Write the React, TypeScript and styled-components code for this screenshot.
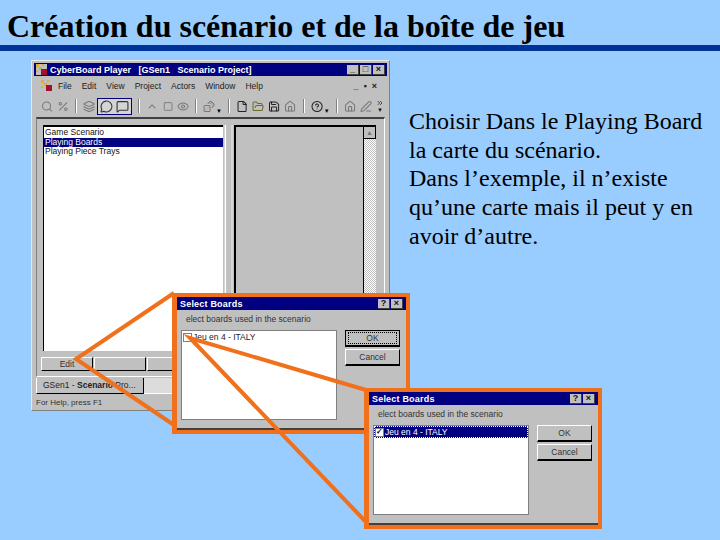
import React from 'react';
import styled, { createGlobalStyle } from 'styled-components';
import {
  Search, Percent, Layers, MessageCircle, MessageSquare, ChevronUp, Square, Eye, Dices,
  File, FolderOpen, Save, Home, HelpCircle, PenLine, ChevronsRight,
} from 'lucide-react';

const GlobalStyle = createGlobalStyle`
  html, body {
    margin: 0;
    padding: 0;
    background: #99ccff;
  }
  * { box-sizing: border-box; }
`;

const Slide = styled.div`
  position: relative;
  width: 720px;
  height: 540px;
  overflow: hidden;
  background: #99ccff;
  font-family: "Liberation Serif", serif;
  color: #000;
`;

const Title = styled.h1`
  margin: 0;
  height: 45px;
  padding: 8px 0 0 7px;
  font-size: 32px;
  line-height: 36px;
  font-weight: bold;
  white-space: nowrap;
`;

const Rule = styled.div`
  height: 6px;
  background: #003399;
`;

const Content = styled.div`
  display: flex;
  align-items: flex-start;
  padding: 9px 0 0 31px;
`;

const Note = styled.p`
  margin: 47px 0 0 19px;
  width: 305px;
  font-size: 24px;
  line-height: 28.7px;
`;

const AppWindow = styled.div`
  display: flex;
  flex-direction: column;
  width: 359px;
  height: 351px;
  flex: none;
  padding: 2px 2px 3px;
  background: #c0c0c0;
  border-top: 1px solid #e8e8e8;
  border-left: 1px solid #e8e8e8;
  border-right: 1px solid #808080;
  border-bottom: 1px solid #808080;
  font-family: "Liberation Sans", sans-serif;
`;

const TitleBar = styled.div`
  display: flex;
  align-items: center;
  height: 13px;
  flex: none;
  padding: 0 2px;
  background: #000080;
  color: #fff;
  font-size: 9px;
  font-weight: bold;
  white-space: nowrap;
`;

const TitleText = styled.span`
  flex: 1;
  margin-left: 3px;
`;

const CaptionButton = styled.span`
  display: flex;
  align-items: center;
  justify-content: center;
  width: 12px;
  height: 10px;
  margin-left: 1px;
  background: #c0c0c0;
  color: #111;
  font-size: 9px;
  line-height: 10px;
  font-weight: bold;
  border-right: 1px solid #404040;
  border-bottom: 1px solid #404040;
`;

const MenuBar = styled.div`
  display: flex;
  align-items: center;
  height: 19px;
  flex: none;
  padding: 0 5px 0 7px;
  font-size: 8.5px;
  color: #222;
`;

const MenuLead = styled.span`
  display: flex;
  margin-right: 6px;
`;

const MenuItem = styled.span`
  margin-right: 10px;
`;

const MenuTail = styled.span`
  margin-left: auto;
  font-size: 9px;
  font-weight: bold;
  letter-spacing: 5px;
`;

const ToolBar = styled.div`
  display: flex;
  align-items: center;
  gap: 4px;
  height: 22px;
  flex: none;
  padding: 0 3px 0 7px;
  color: #777;
`;

const ToolSep = styled.span`
  width: 2px;
  height: 14px;
  margin: 0 2px;
  border-left: 1px solid #808080;
  border-right: 1px solid #fff;
`;

const ToolGroup = styled.span`
  display: flex;
  align-items: center;
  gap: 3px;
  height: 17px;
  padding: 0 2px;
  margin-left: -2px;
  color: #333;
  border: 1px solid #000080;
  background: #d4d4d4;
`;

const DropMark = styled.span`
  align-self: flex-end;
  margin: 0 0 3px -3px;
  font-size: 6px;
  line-height: 6px;
  color: #000;
`;

const ToolTail = styled.span`
  display: flex;
  flex-direction: column;
  align-items: center;
  margin-left: auto;
  color: #111;
  font-size: 6px;
  line-height: 7px;
`;

const Client = styled.div`
  display: flex;
  flex: none;
  height: 260px;
  margin: 0 2px;
  padding: 6px;
  border: 1px solid #808080;
  border-top: 2px solid #404040;
  border-right-color: #fff;
  border-bottom-color: #fff;
`;

const LeftPane = styled.div`
  display: flex;
  flex-direction: column;
  width: 180px;
  flex: none;
`;

const TreeList = styled.div`
  height: 226px;
  flex: none;
  padding-top: 1px;
  background: #fff;
  border-top: 2px solid #000;
  border-left: 1px solid #000;
  font-size: 8.5px;
  line-height: 9.5px;
  color: #111;
`;

const TreeRow = styled.div<{ $selected?: boolean }>`
  padding-left: 1px;
  background: ${(props) => (props.$selected ? '#000080' : 'transparent')};
  color: ${(props) => (props.$selected ? '#fff' : '#111')};
`;

const PaneButtons = styled.div`
  display: flex;
  gap: 1px;
  margin: 6px 0 0 -2px;
`;

const PaneButton = styled.div`
  width: 52px;
  height: 14px;
  background: #c0c0c0;
  font-size: 8.5px;
  line-height: 13px;
  text-align: center;
  color: #333;
  border-top: 1px solid #fff;
  border-left: 1px solid #fff;
  border-right: 1px solid #000;
  border-bottom: 1px solid #000;
`;

const Splitter = styled.div`
  width: 11px;
  flex: none;
  border-left: 2px solid #fff;
  border-right: 1px solid #fff;
  background: #c0c0c0;
  transform: scaleX(0.7);
`;

const RightPane = styled.div`
  display: flex;
  width: 142px;
  flex: none;
  height: 240px;
  border-top: 2px solid #000;
  border-left: 2px solid #000;
`;

const PaneArea = styled.div`
  flex: 1;
  background: #c0c0c0;
  border-right: 1px solid #000;
`;

const ScrollTrack = styled.div`
  width: 12px;
  flex: none;
  background: repeating-conic-gradient(#c0c0c0 0% 25%, #fff 0% 50%) 0 0 / 2px 2px;
`;

const ScrollUp = styled.div`
  display: flex;
  align-items: center;
  justify-content: center;
  height: 12px;
  background: #c0c0c0;
  color: #777;
  font-size: 7px;
  border-right: 1px solid #000;
  border-bottom: 1px solid #000;
`;

const TabStrip = styled.div`
  display: flex;
  flex: none;
  height: 16px;
  margin-top: 1px;
  padding-left: 2px;
`;

const DocTab = styled.div`
  width: 108px;
  background: #c0c0c0;
  font-size: 8.5px;
  line-height: 14px;
  padding-left: 6px;
  color: #222;
  white-space: nowrap;
  border-left: 1px solid #fff;
  border-right: 1px solid #000;
  border-bottom: 1px solid #000;
`;

const TabFill = styled.div`
  flex: 1;
  background: #dcdcdc;
  border-bottom: 1px solid #fff;
`;

const StatusBar = styled.div`
  flex: none;
  height: 13px;
  margin-top: 2px;
  padding-left: 2px;
  font-size: 8px;
  line-height: 13px;
  color: #333;
`;

const Connectors = styled.svg<{ $layer: number }>`
  position: absolute;
  inset: 0;
  width: 720px;
  height: 540px;
  z-index: ${(props) => props.$layer};
`;

const Dialog = styled.div<{ $left: number; $top: number; $layer: number }>`
  position: absolute;
  left: ${(props) => props.$left}px;
  top: ${(props) => props.$top}px;
  z-index: ${(props) => props.$layer};
  width: 238px;
  height: 141px;
  display: flex;
  flex-direction: column;
  background: #c0c0c0;
  border: 4px solid #f0701c;
  border-left-width: 5px;
  font-family: "Liberation Sans", sans-serif;
`;

const DialogTitle = styled(TitleBar)`
  padding: 0 3px 0 0;
  letter-spacing: 0.2px;
`;

const DialogLabel = styled.div`
  height: 20px;
  padding: 3px 0 0 9px;
  font-size: 8.5px;
  line-height: 12px;
  color: #333;
`;

const DialogBody = styled.div`
  display: flex;
  flex: none;
  align-items: flex-start;
  gap: 8px;
  padding-left: 4px;
`;

const BoardList = styled.div`
  width: 156px;
  height: 90px;
  flex: none;
  background: #fff;
  border: 1px solid #808080;
  font-size: 8.5px;
`;

const BoardRow = styled.div<{ $selected?: boolean }>`
  display: flex;
  align-items: center;
  gap: 1px;
  height: 12px;
  padding-left: 1px;
  background: ${(props) => (props.$selected ? '#000080' : 'transparent')};
  color: ${(props) => (props.$selected ? '#fff' : '#222')};
  outline: ${(props) => (props.$selected ? '1px dotted #fff' : 'none')};
  outline-offset: -1px;
`;

const CheckBox = styled.span`
  display: flex;
  align-items: center;
  justify-content: center;
  width: 9px;
  height: 9px;
  flex: none;
  background: #fff;
  color: #000;
  font-size: 8px;
  line-height: 8px;
  font-weight: bold;
  border: 1px solid #808080;
`;

const DialogButtons = styled.div`
  display: flex;
  flex-direction: column;
  gap: 2px;
`;

const DialogButton = styled.div<{ $isDefault?: boolean }>`
  position: relative;
  width: 55px;
  height: 17px;
  background: #c0c0c0;
  font-size: 8.5px;
  line-height: 15px;
  text-align: center;
  color: #333;
  border-top: 1px solid ${(props) => (props.$isDefault ? '#000' : '#fff')};
  border-left: 1px solid ${(props) => (props.$isDefault ? '#000' : '#fff')};
  border-right: 1px solid #000;
  border-bottom: 2px solid #000;
`;

const FocusRing = styled.span`
  position: absolute;
  inset: 1px 2px;
  border: 1px dotted #000;
`;

const DialogRule = styled.div`
  margin-top: auto;
  height: 2px;
  background: #404040;
`;

function AppIcon() {
  return (
    <svg width="11" height="11" viewBox="0 0 11 11">
      <rect width="11" height="11" fill="#c0c0c0" />
      <path d="M0 0h3v3H0zM3 3h3v3H3zM6 0h2v2H6zM0 6h2v2H0z" fill="#d8b040" />
      <rect x="5" y="5" width="6" height="6" fill="#a01030" />
    </svg>
  );
}

function SelectDialog({ left, top, layer, selected }: { left: number; top: number; layer: number; selected?: boolean }) {
  return (
    <Dialog $left={left} $top={top} $layer={layer}>
      <DialogTitle>
        <TitleText>Select Boards</TitleText>
        <CaptionButton>?</CaptionButton>
        <CaptionButton>×</CaptionButton>
      </DialogTitle>
      <DialogLabel>elect boards used in the scenario</DialogLabel>
      <DialogBody>
        <BoardList>
          <BoardRow $selected={selected}>
            <CheckBox>{selected ? '✓' : ''}</CheckBox>
            Jeu en 4 - ITALY
          </BoardRow>
        </BoardList>
        <DialogButtons>
          <DialogButton $isDefault={!selected}>
            {!selected && <FocusRing />}
            OK
          </DialogButton>
          <DialogButton>Cancel</DialogButton>
        </DialogButtons>
      </DialogBody>
      <DialogRule />
    </Dialog>
  );
}

export default function App() {
  return (
    <Slide>
      <GlobalStyle />
      <Title>Création du scénario et de la boîte de jeu</Title>
      <Rule />
      <Content>
        <AppWindow>
          <TitleBar>
            <AppIcon />
            <TitleText>CyberBoard Player &nbsp; [GSen1 &nbsp; Scenario Project]</TitleText>
            <CaptionButton>_</CaptionButton>
            <CaptionButton>□</CaptionButton>
            <CaptionButton>×</CaptionButton>
          </TitleBar>
          <MenuBar>
            <MenuLead><AppIcon /></MenuLead>
            <MenuItem>File</MenuItem>
            <MenuItem>Edit</MenuItem>
            <MenuItem>View</MenuItem>
            <MenuItem>Project</MenuItem>
            <MenuItem>Actors</MenuItem>
            <MenuItem>Window</MenuItem>
            <MenuItem>Help</MenuItem>
            <MenuTail>_▪×</MenuTail>
          </MenuBar>
          <ToolBar>
            <Search size={13} />
            <Percent size={13} />
            <ToolSep />
            <Layers size={13} />
            <ToolGroup>
              <MessageCircle size={13} />
              <MessageSquare size={13} />
            </ToolGroup>
            <ToolSep />
            <ChevronUp size={13} />
            <Square size={11} />
            <Eye size={13} />
            <ToolSep />
            <Dices size={13} />
            <DropMark>▼</DropMark>
            <ToolSep />
            <File size={13} color="#222" />
            <FolderOpen size={13} color="#6b6b20" />
            <Save size={13} color="#222" />
            <Home size={13} />
            <ToolSep />
            <HelpCircle size={13} color="#222" />
            <DropMark>▼</DropMark>
            <ToolSep />
            <Home size={13} />
            <PenLine size={13} />
            <ToolTail>
              <ChevronsRight size={8} />
              ▼
            </ToolTail>
          </ToolBar>
          <Client>
            <LeftPane>
              <TreeList>
                <TreeRow>Game Scenario</TreeRow>
                <TreeRow $selected>Playing Boards</TreeRow>
                <TreeRow>Playing Piece Trays</TreeRow>
              </TreeList>
              <PaneButtons>
                <PaneButton>Edit</PaneButton>
                <PaneButton />
                <PaneButton />
              </PaneButtons>
            </LeftPane>
            <Splitter />
            <RightPane>
              <PaneArea />
              <ScrollTrack>
                <ScrollUp>▲</ScrollUp>
              </ScrollTrack>
            </RightPane>
          </Client>
          <TabStrip>
            <DocTab>GSen1 - <b>Scenario</b> Pro...</DocTab>
            <TabFill />
          </TabStrip>
          <StatusBar>For Help, press F1</StatusBar>
        </AppWindow>
        <Note>
          Choisir Dans le Playing Board la carte du scénario.
          <br />
          Dans l’exemple, il n’existe qu’une carte mais il peut y en avoir d’autre.
        </Note>
      </Content>
      <Connectors $layer={1} viewBox="0 0 720 540">
        <path d="M174 293L76 359L174 425" fill="none" stroke="#f0701c" strokeWidth="4" />
      </Connectors>
      <SelectDialog left={172} top={293} layer={2} />
      <Connectors $layer={3} viewBox="0 0 720 540">
        <path d="M366 390L190 338L366 522" fill="none" stroke="#f0701c" strokeWidth="4" />
      </Connectors>
      <SelectDialog left={364} top={388} layer={4} selected />
    </Slide>
  );
}
